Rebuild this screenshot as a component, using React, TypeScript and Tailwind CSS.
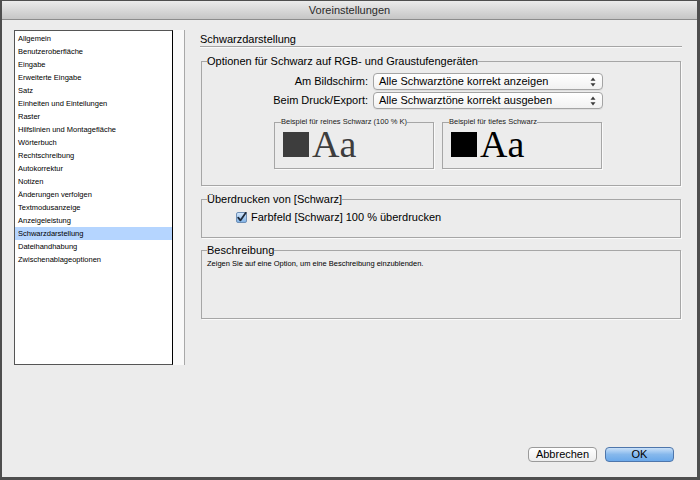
const listItems = [
  'Allgemein',
  'Benutzeroberfläche',
  'Eingabe',
  'Erweiterte Eingabe',
  'Satz',
  'Einheiten und Einteilungen',
  'Raster',
  'Hilfslinien und Montagefläche',
  'Wörterbuch',
  'Rechtschreibung',
  'Autokorrektur',
  'Notizen',
  'Änderungen verfolgen',
  'Textmodusanzeige',
  'Anzeigeleistung',
  'Schwarzdarstellung',
  'Dateihandhabung',
  'Zwischenablageoptionen',
];

const ui = { fontFamily: '"Liberation Sans", Arial, sans-serif' };

function PopUp({ label }: { label: string }) {
  return (
    <div className="h-[17px] w-[230px] flex items-center justify-between rounded-[4px] border border-[#a4a4a4] bg-gradient-to-b from-white to-[#f1f1f1] pl-[5px] pr-[6px] shadow-[0_1px_0_rgba(0,0,0,0.06)]">
      <span className="text-[11px] leading-none text-black">{label}</span>
      <svg width="6" height="10" viewBox="0 0 6 10">
        <path d="M3 0.5 L5.5 3.8 H0.5 Z" fill="#3a3a3a" />
        <path d="M3 9.5 L5.5 6.2 H0.5 Z" fill="#3a3a3a" />
      </svg>
    </div>
  );
}

function Sample({ legend, color }: { legend: string; color: string }) {
  return (
    <fieldset className="w-[160px] h-[52px] border border-[#a6a6a6] shadow-[1px_1px_0_#fafafa]">
      <legend className="ml-[6px] text-[7.5px] leading-[10px] text-[#222]">{legend}</legend>
      <div className="flex items-baseline pl-[8px] mt-[4px]">
        <div className="w-[26px] h-[25px]" style={{ backgroundColor: color }} />
        <span
          className="ml-[3px] inline-block text-[38px] leading-[27px]"
          style={{ fontFamily: '"Liberation Serif", "Times New Roman", serif', color }}
        >
          Aa
        </span>
      </div>
    </fieldset>
  );
}

function Group({ title, className, children }: { title: string; className: string; children?: React.ReactNode }) {
  return (
    <fieldset className={`ml-[1px] w-[480px] border border-[#a6a6a6] shadow-[1px_1px_0_#fafafa] ${className}`}>
      <legend className="ml-[5px] text-[11px] leading-[14px] text-black">{title}</legend>
      {children}
    </fieldset>
  );
}

export default function App() {
  return (
    <div className="w-[700px] h-[480px] bg-[#4e4e4e] pl-[2px] pr-[3px] pb-[3px] pt-[1px] flex" style={ui}>
      <div className="flex-1 flex flex-col bg-[#ececec]">
        <div className="h-[19px] shrink-0 flex items-center justify-center bg-gradient-to-b from-[#ebebeb] to-[#c6c6c6] border-b border-[#8c8c8c]">
          <span className="text-[11px] text-[#2a2a2a]">Voreinstellungen</span>
        </div>

        <div className="flex-1 flex flex-col">
          <div className="flex pt-[10px] pl-[12px]">
            <div className="flex h-[335px] w-[171px]">
              <div className="w-[159px] h-full bg-white border border-[#555] border-r-black pt-[1px]">
                {listItems.map((item) => (
                  <div
                    key={item}
                    className={`h-[13px] flex items-center pl-[3px] text-[7.5px] text-black ${
                      item === 'Schwarzdarstellung' ? 'bg-[#b5d5ff]' : ''
                    }`}
                  >
                    {item}
                  </div>
                ))}
              </div>
              <div className="w-[12px] h-full bg-[#f9f9f9] border-r border-[#a8a8a8]" />
            </div>

            <div className="ml-[15px] w-[482px] flex flex-col">
              <div className="h-[17px] pt-[2px] border-b border-[#a5a5a5] shadow-[0_1px_0_#fafafa]">
                <div className="text-[11px] leading-[14px] text-black">Schwarzdarstellung</div>
              </div>

              <Group title="Optionen für Schwarz auf RGB- und Graustufengeräten" className="mt-[7px] h-[132px]">
                <div className="mt-[5px] grid grid-cols-[166px_230px] gap-x-[5px] gap-y-[2px] items-center">
                  <div className="text-right text-[11px] text-black">Am Bildschirm:</div>
                  <PopUp label="Alle Schwarztöne korrekt anzeigen" />
                  <div className="text-right text-[11px] text-black">Beim Druck/Export:</div>
                  <PopUp label="Alle Schwarztöne korrekt ausgeben" />
                </div>
                <div className="mt-[8px] ml-[72px] flex gap-[8px]">
                  <Sample legend="Beispiel für reines Schwarz (100 % K)" color="#3d3d3d" />
                  <Sample legend="Beispiel für tiefes Schwarz" color="#000000" />
                </div>
              </Group>

              <Group title="Überdrucken von [Schwarz]" className="mt-[6px] h-[46px]">
                <div className="mt-[4px] ml-[34px] h-[14px] flex items-center gap-[4px]">
                  <svg width="11" height="11" viewBox="0 0 11 11">
                    <defs>
                      <linearGradient id="cb" x1="0" y1="0" x2="0" y2="1">
                        <stop offset="0" stopColor="#d6e8fb" />
                        <stop offset="1" stopColor="#7fb1e6" />
                      </linearGradient>
                    </defs>
                    <rect x="0.5" y="0.5" width="10" height="10" rx="1.5" fill="url(#cb)" stroke="#6f8fb5" />
                    <path d="M2.2 5.6 L4.4 8.4 L9.8 0.8" fill="none" stroke="#1d2a3a" strokeWidth="1.8" strokeLinecap="round" strokeLinejoin="round" />
                  </svg>
                  <span className="text-[11px] text-black">Farbfeld [Schwarz] 100 % überdrucken</span>
                </div>
              </Group>

              <Group title="Beschreibung" className="mt-[5px] h-[76px]">
                <div className="mt-[2px] pl-[5px] text-[7.5px] leading-[10px] text-black">
                  Zeigen Sie auf eine Option, um eine Beschreibung einzublenden.
                </div>
              </Group>
            </div>
          </div>

          <div className="mt-auto flex justify-end gap-[8px] pr-[23px] pb-[15px]">
            <button className="w-[69px] h-[15px] rounded-[4px] border border-[#9a9a9a] bg-gradient-to-b from-white to-[#ededed] text-[11px] leading-none text-black">
              Abbrechen
            </button>
            <button className="w-[69px] h-[15px] rounded-[4px] border border-[#4e76ab] bg-gradient-to-b from-[#c9e0f8] via-[#86b8ec] to-[#6aa8ea] text-[11px] leading-none text-black">
              OK
            </button>
          </div>
        </div>
      </div>
    </div>
  );
}
